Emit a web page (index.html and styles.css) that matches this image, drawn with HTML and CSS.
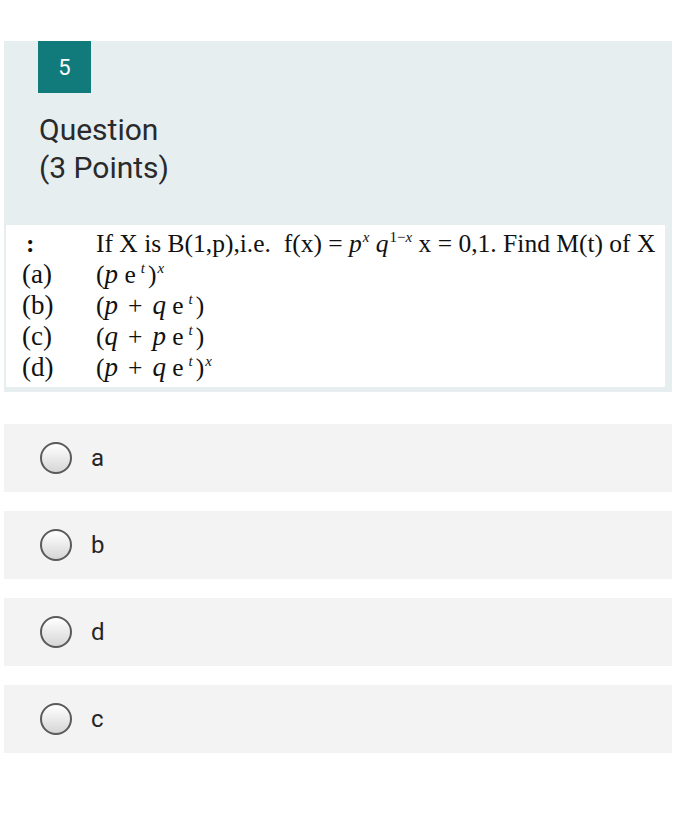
FILE: index.html
```html
<!DOCTYPE html>
<html lang="en">
<head>
    <meta charset="UTF-8">
    <title>Question 5</title>
    <link rel="stylesheet" href="styles.css">
</head>
<body>
    <div class="page">
        <div class="question-card">
            <div class="number-badge">5</div>
            <div class="question-title">
                <div>Question</div>
                <div>(3 Points)</div>
            </div>

            <div class="question-body">
                <div class="mark colon">:</div>
                <div class="line">If X is B(1,p),i.e.&nbsp; f(x) = <i>p</i><sup><i>x</i></sup> <i>q</i><sup>1&minus;<i>x</i></sup> x = 0,1. Find M(t) of X</div>

                <div class="mark">(a)</div>
                <div class="line">(<i class="var">p</i> e<sup class="exp"><i>t</i></sup>)<sup><i>x</i></sup></div>

                <div class="mark">(b)</div>
                <div class="line">(<i class="var">p</i><span class="op">+</span><i class="var">q</i> e<sup class="exp"><i>t</i></sup>)</div>

                <div class="mark">(c)</div>
                <div class="line">(<i class="var">q</i><span class="op">+</span><i class="var">p</i> e<sup class="exp"><i>t</i></sup>)</div>

                <div class="mark">(d)</div>
                <div class="line">(<i class="var">p</i><span class="op">+</span><i class="var">q</i> e<sup class="exp"><i>t</i></sup>)<sup><i>x</i></sup></div>
            </div>
        </div>

        <div class="choices">
            <label class="choice"><span class="radio"></span><span class="choice-text">a</span></label>
            <label class="choice"><span class="radio"></span><span class="choice-text">b</span></label>
            <label class="choice"><span class="radio"></span><span class="choice-text">d</span></label>
            <label class="choice"><span class="radio"></span><span class="choice-text">c</span></label>
        </div>
    </div>
</body>
</html>
```

FILE: styles.css
```css
:root {
    --card-bg: #e6eef0;
    --badge-bg: #117a7b;
    --choice-bg: #f3f3f3;
    --text-color: #2a2a2a;
}

body {
    margin: 0;
    background-color: #ffffff;
    font-family: Roboto, "Liberation Sans", Arial, sans-serif;
    color: var(--text-color);
}

.page {
    padding-top: 41px;
}

.question-card {
    background-color: var(--card-bg);
    margin: 0 26px 0 4px;
    padding: 0 7px 5px 2px;
}

.number-badge {
    width: 53px;
    height: 52px;
    margin-left: 32px;
    background-color: var(--badge-bg);
    color: #ffffff;
    font-size: 22px;
    display: flex;
    align-items: center;
    justify-content: center;
}

.question-title {
    margin: 18px 0 0 33px;
    font-size: 30px;
    line-height: 38px;
}

/* pasted picture of the question */
.question-body {
    margin-top: 38px;
    background-color: #ffffff;
    padding: 3px 0 4px 16px;
    display: grid;
    grid-template-columns: 74px 1fr;
    font-family: "Liberation Serif", "Times New Roman", serif;
    font-size: 25.5px;
    line-height: 31px;
    color: #111111;
}

.question-body .mark {
    font-size: 27px;
}

.question-body .colon {
    padding-left: 4px;
    font-weight: bold;
    font-size: 25.5px;
}

.question-body i {
    font-style: italic;
}

.question-body i.var {
    font-size: 27px;
}

.question-body .op {
    margin: 0 10px;
}

.question-body sup {
    font-size: 15px;
    line-height: 0;
    vertical-align: 10px;
    margin-left: 1px;
}

.question-body sup.exp {
    margin: 0 3px 0 5px;
}

.choices {
    margin-top: 32px;
    display: flex;
    flex-direction: column;
    gap: 19px;
}

.choice {
    height: 68px;
    margin: 0 26px 0 4px;
    background-color: var(--choice-bg);
    display: flex;
    align-items: center;
    padding-left: 36px;
    gap: 19px;
}

.radio {
    width: 28px;
    height: 28px;
    border: 2px solid #5a5a5a;
    border-radius: 50%;
    background: linear-gradient(#ffffff, #d6d6d6);
}

.choice-text {
    font-size: 24px;
    color: #262626;
}
```
